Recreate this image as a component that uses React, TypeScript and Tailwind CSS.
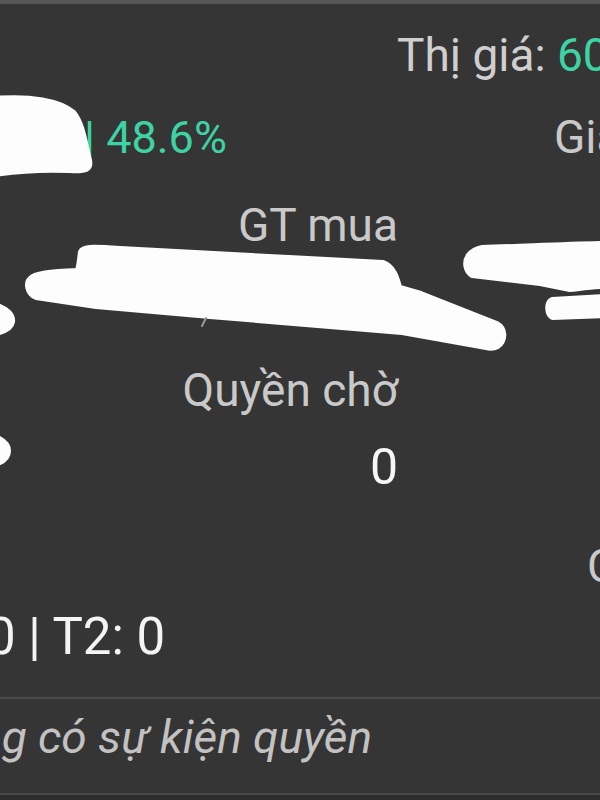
import React from "react";

export default function App() {
  return (
    <div className="relative w-[600px] h-[800px] overflow-hidden bg-[#353535] font-[Roboto,'Noto_Sans',sans-serif] flex flex-col">
      <div className="h-[4px] bg-[#565656] shrink-0" />
      {/* header */}
      <div className="mt-[28px] pl-[397px] whitespace-nowrap text-[46px] leading-none text-[#cfcfcf] shrink-0">
        Thị giá: <span className="text-[#3ed3a4]">60.5</span>
      </div>
      {/* body */}
      <div className="grid grid-cols-[180px_218px_1fr] h-[619px] shrink-0">
        <div className="flex flex-col whitespace-nowrap">
          <div className="mt-[37px] pl-[84px] text-[45px] leading-none text-[#3ed3a4]">| 48.6%</div>
          <div className="mt-[451px] ml-[-13px] text-[51px] leading-none text-[#f4f4f4]">0 | T2: 0</div>
        </div>
        <div className="flex flex-col items-end whitespace-nowrap">
          <div className="mt-[124px] text-[46px] leading-none text-[#c9c9c9]">GT mua</div>
          <div className="mt-[119px] text-[46px] leading-none text-[#c9c9c9]">Quyền chờ</div>
          <div className="mt-[29px] text-[50px] leading-none text-[#f6f6f6]">0</div>
        </div>
        <div className="flex flex-col whitespace-nowrap">
          <div className="mt-[36px] pl-[156px] text-[46px] leading-none text-[#c9c9c9]">Giá vốn</div>
          <div className="mt-[383px] pl-[189px] text-[46px] leading-none text-[#c9c9c9]">CK chờ về</div>
        </div>
      </div>
      <div className="h-[2px] bg-[#4a4a4a] shrink-0" />
      <div className="mt-[15px] ml-[-101px] whitespace-nowrap italic text-[46px] leading-none text-[#c2c2c2] shrink-0">
        Không có sự kiện quyền
      </div>
      <div className="mt-[33px] h-[2px] bg-[#4a4a4a] shrink-0" />
      <div className="flex-1 bg-[#2d2d2d]" />

      {/* white scribbles drawn over the page */}
      <svg className="absolute inset-0 pointer-events-none" width="600" height="800" viewBox="0 0 600 800">
        <g fill="#fdfdfd" stroke="#fdfdfd" strokeWidth="4" strokeLinejoin="round">
          <path d="M-5 98 C30 95 60 100 74 112 C84 124 86 146 90 160 C92 170 86 172 70 171 C45 170 20 171 -5 175 Z" />
          <path d="M80 252 C82 246 90 246 120 248 L383 262 C395 266 398 280 400 287 L421 293 L497 323 C506 328 507 340 498 347 C494 349 490 349 486 348 L402 333 L210 317 L96 307 L36 298 C26 294 25 282 30 278 C34 273 50 271 77 270 C79 264 79 258 80 252 Z" />
          <path d="M-5 304 C8 308 14 315 13 322 C12 328 6 332 -5 334 Z" />
          <path d="M482 247 C520 246 560 244 605 243 L605 287 C590 287 575 290 570 290 L540 284 L472 276 C465 272 463 262 468 255 C472 250 476 248 482 247 Z" />
          <path d="M552 299 L605 296 L605 316 L553 318 C546 316 545 302 552 299 Z" />
          <path d="M-5 436 C5 440 9 446 9 451 C9 457 5 462 -5 465 Z" />
        </g>
        <path d="M206 318 L202 326" stroke="#9a9a9a" strokeWidth="2" strokeLinecap="round" />
      </svg>
    </div>
  );
}
